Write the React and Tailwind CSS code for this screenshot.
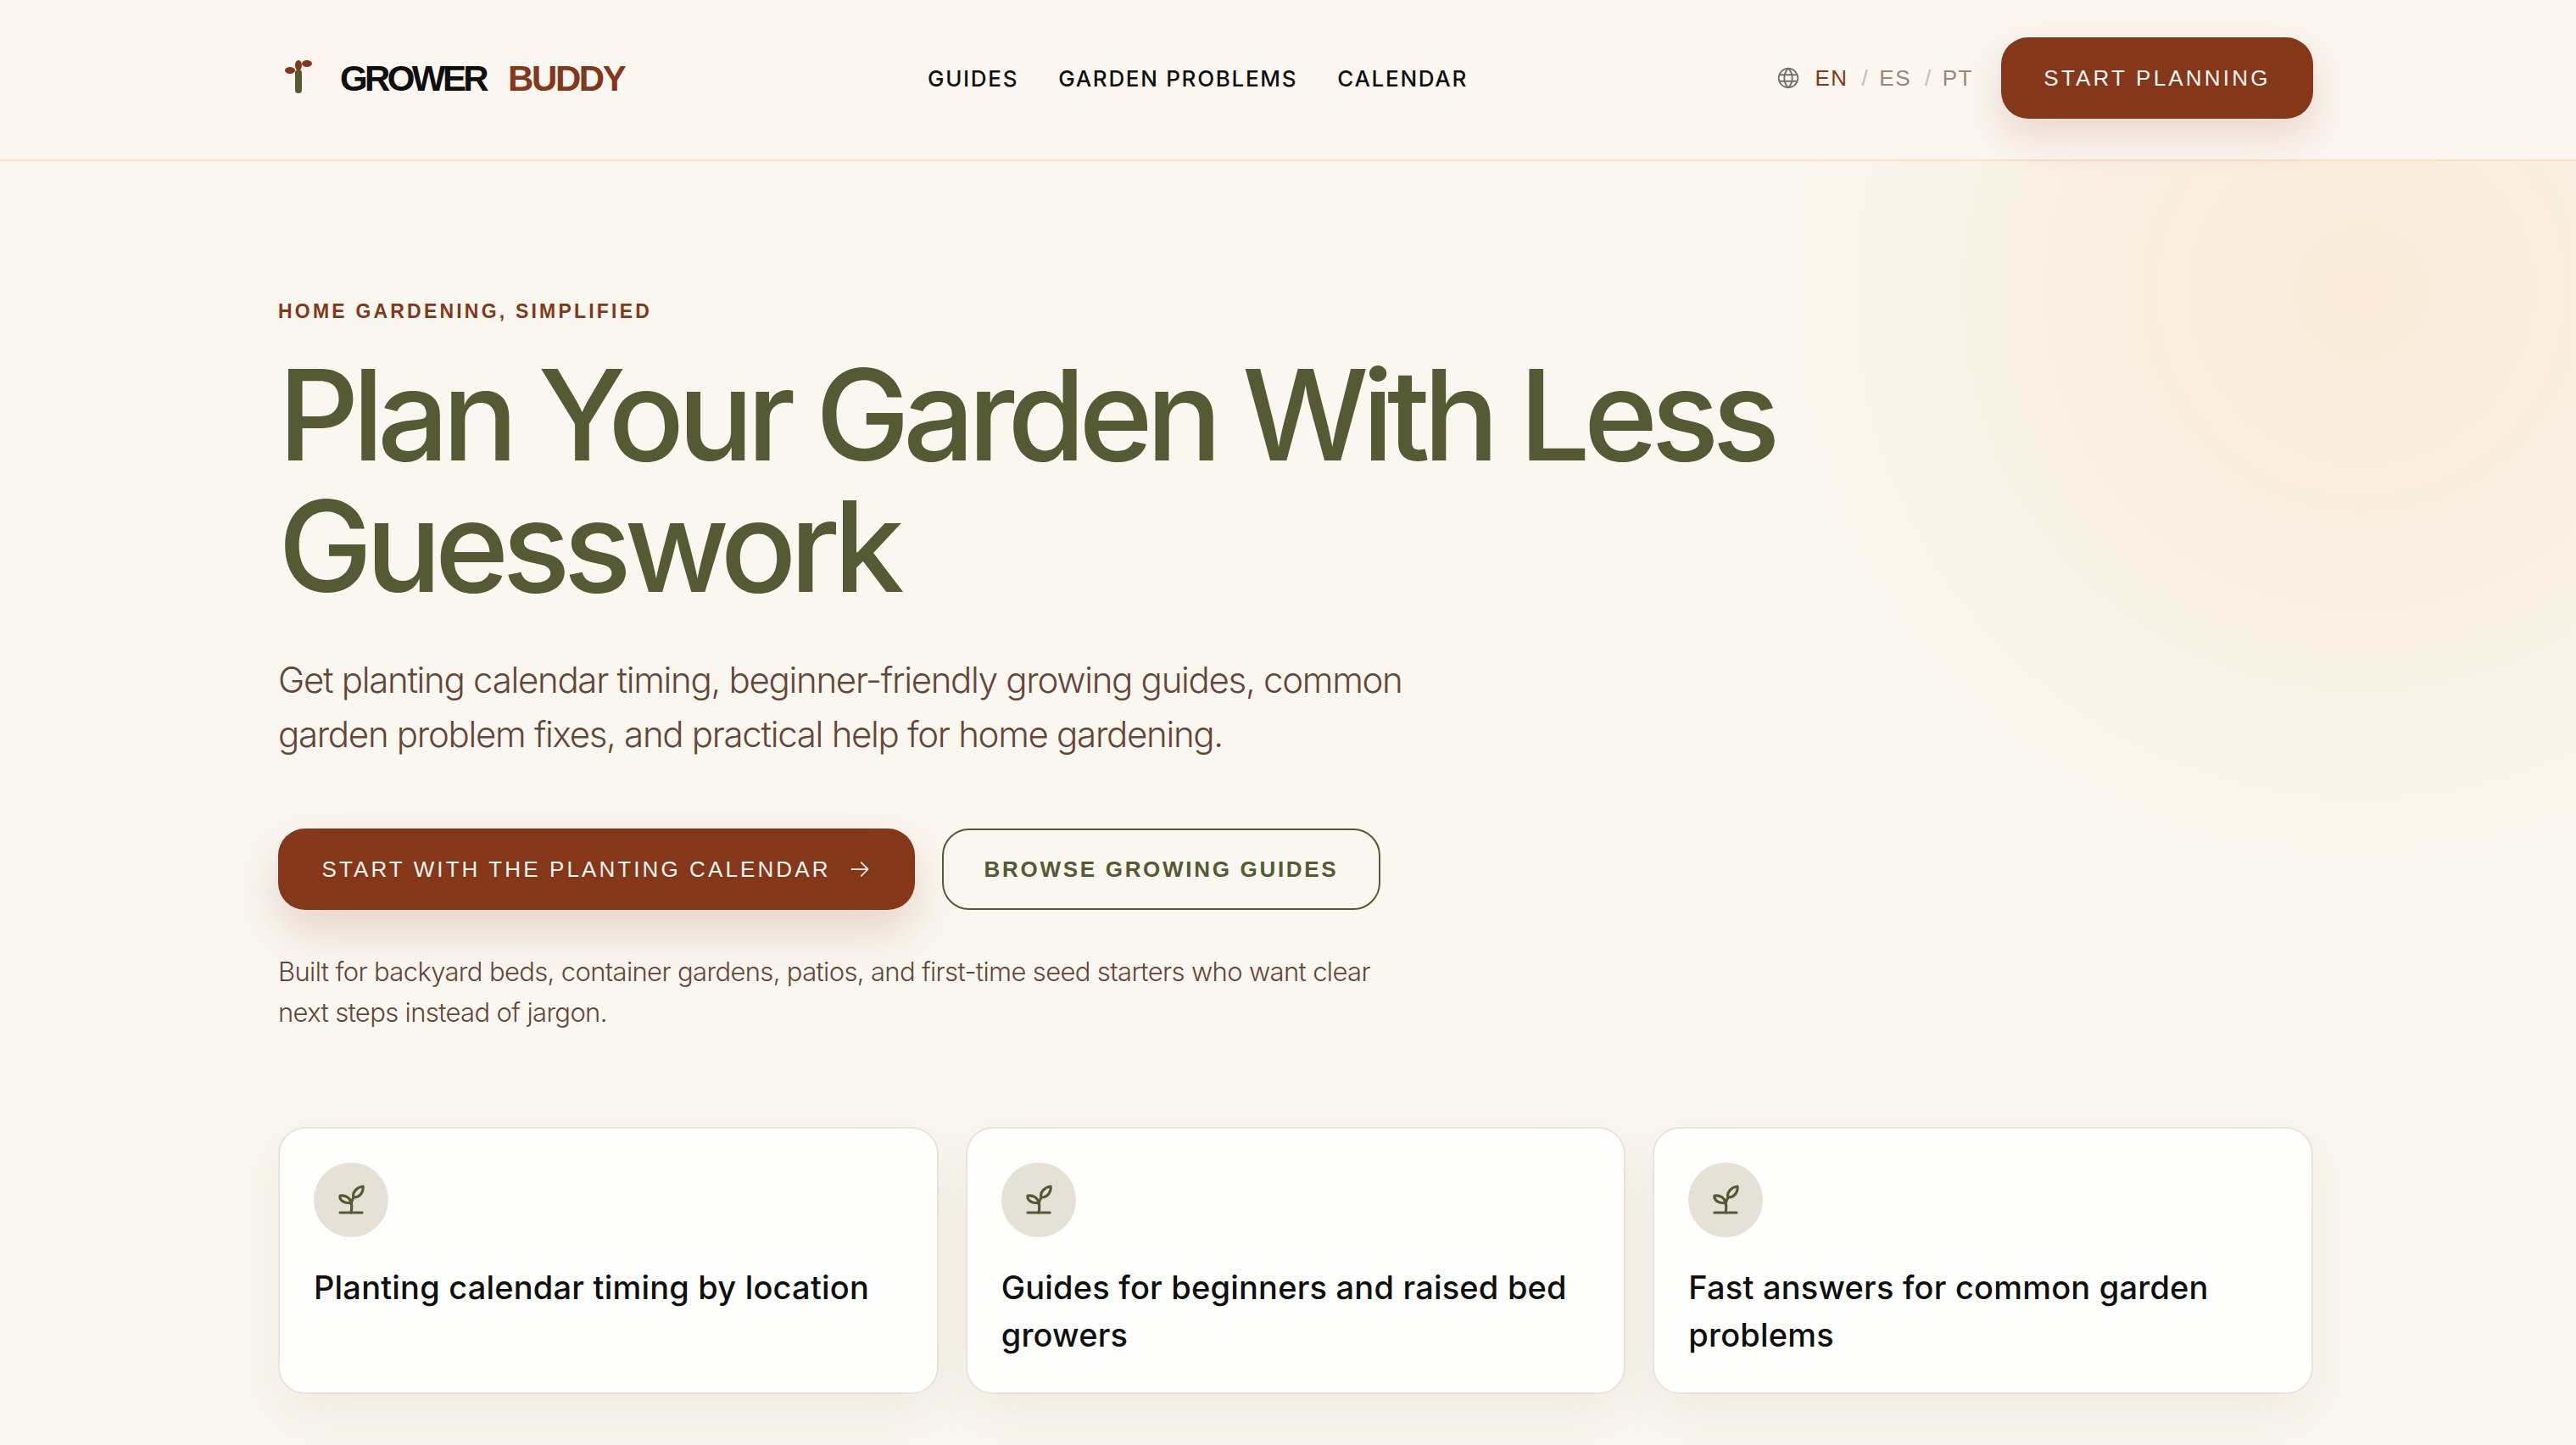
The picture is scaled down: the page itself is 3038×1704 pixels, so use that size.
import React from "react";
import { PiGlobe, PiArrowRight } from "react-icons/pi";

const features = [
  "Planting calendar timing by location",
  "Guides for beginners and raised bed growers",
  "Fast answers for common garden problems",
];

const Logo = () => (
  <svg width="40" height="48" viewBox="0 0 40 48" className="ml-[8px] shrink-0">
    <rect x="12" y="14" width="8" height="28" rx="4" fill="#545a34" />
    <ellipse cx="6" cy="15" rx="6" ry="4" fill="#85371a" />
    <ellipse cx="16" cy="9" rx="4" ry="6" fill="#85371a" />
    <ellipse cx="26" cy="7" rx="6" ry="4" fill="#85371a" />
  </svg>
);

const Seedling = () => (
  <svg width="32" height="38" viewBox="0 0 32 38" fill="none" stroke="#545a34" strokeWidth="3.2" strokeLinecap="round" strokeLinejoin="round">
    <path d="M3 34H29" />
    <path d="M16 34C17 29 17 25 16 22" />
    <path d="M16 24C16 21 18 18 19 16" />
    <path d="M16 22C15 17 10 13 3 14C2 19 8 24 16 22Z" />
    <path d="M19 16C17 10 23 4 30 3C31 9 27 16 19 16Z" />
  </svg>
);

export default function App() {
  return (
    <div className="relative h-[1704px] w-[3038px] overflow-hidden bg-[#faf7f0] font-['Inter',sans-serif]">
      {/* glow top right */}
      <div className="absolute right-[-447px] top-[-355px] h-[1400px] w-[1400px] bg-[radial-gradient(closest-side,#f9ead8_0%,#f8efe2_45%,#faf7f0_100%)]" />

      <header className="relative flex h-[190px] items-center border-b-2 border-[#f7e0c4] bg-[#fbf6f0] pb-[4px]">
        <div className="ml-[328px] flex w-[2400px] items-center">
          <div className="flex w-[766px] items-center">
            <Logo />
            <span className="ml-[25px] font-['Liberation_Sans',sans-serif] text-[42px] font-bold tracking-[-3.6px] text-[#0f0f0f]">GROWER</span>
            <span className="ml-[26px] font-['Liberation_Sans',sans-serif] text-[42px] font-bold tracking-[-2.4px] text-[#85371a]">BUDDY</span>
          </div>
          <nav className="flex items-center gap-[47px] text-[26px] font-medium tracking-[1.7px] text-[#0f0f0f]">
            <span>GUIDES</span>
            <span>GARDEN PROBLEMS</span>
            <span>CALENDAR</span>
          </nav>
          <div className="ml-auto flex items-center font-['Liberation_Sans',sans-serif] text-[26px] tracking-[1.5px]">
            <PiGlobe className="mr-[16px] text-[30px] text-[#6f6f6b]" />
            <span className="text-[#85371a]">EN</span>
            <span className="ml-[16px] text-[#c6bdb2]">/</span>
            <span className="ml-[12px] text-[#9c8778]">ES</span>
            <span className="ml-[16px] text-[#c6bdb2]">/</span>
            <span className="ml-[12px] text-[#9c8778]">PT</span>
            <button className="ml-[33px] h-[96px] w-[368px] rounded-[32px] bg-[#85371a] text-[26px] tracking-[3.2px] whitespace-nowrap text-[#fbf6f0] shadow-[0_20px_48px_rgba(133,55,26,0.16)]">
              START PLANNING
            </button>
          </div>
        </div>
      </header>

      <main className="relative ml-[328px] w-[2400px]">
        <p className="mt-[162px] font-['Liberation_Sans',sans-serif] text-[23px] leading-[30px] font-bold tracking-[3.2px] text-[#85371a]">
          HOME GARDENING, SIMPLIFIED
        </p>
        <h1 className="mt-[30px] w-[1900px] text-[149px] leading-[155px] font-medium tracking-[-8.1px] text-[#545a34]">
          Plan Your Garden With Less Guesswork
        </h1>
        <p className="mt-[48px] w-[1400px] text-[42px] leading-[64px] font-[350] tracking-[-1.3px] text-[#664536]">
          Get planting calendar timing, beginner-friendly growing guides, common garden problem fixes, and practical help for home gardening.
        </p>
        <div className="mt-[79px] flex gap-[32px]">
          <button className="flex h-[96px] w-[751px] items-center justify-center gap-[20px] rounded-[32px] bg-[#85371a] font-['Liberation_Sans',sans-serif] text-[26px] tracking-[3.1px] whitespace-nowrap text-[#fbf6f0] shadow-[0_24px_56px_rgba(133,55,26,0.18)]">
            START WITH THE PLANTING CALENDAR
            <PiArrowRight className="text-[28px]" />
          </button>
          <button className="h-[96px] w-[517px] rounded-[32px] border-2 border-[#545a34] font-['Liberation_Sans',sans-serif] text-[26px] font-bold tracking-[2.7px] whitespace-nowrap text-[#545a34]">
            BROWSE GROWING GUIDES
          </button>
        </div>
        <p className="mt-[49px] w-[1320px] text-[31px] leading-[48px] font-[350] tracking-[-0.65px] text-[#664536]">
          Built for backyard beds, container gardens, patios, and first-time seed starters who want clear next steps instead of jargon.
        </p>
        <div className="mt-[111px] grid grid-cols-3 gap-[32px]">
          {features.map((text) => (
            <div key={text} className="h-[315px] rounded-[32px] border-2 border-[#e9e4d9] bg-[#fefefc] p-[40px] shadow-[0_24px_64px_rgba(84,70,40,0.07)]">
              <div className="flex h-[88px] w-[88px] items-center justify-center rounded-full bg-[#e6e1d6]">
                <Seedling />
              </div>
              <p className="mt-[31px] text-[38px] leading-[56px] font-medium tracking-[0.2px] text-[#0f0f0f]">{text}</p>
            </div>
          ))}
        </div>
      </main>
    </div>
  );
}
